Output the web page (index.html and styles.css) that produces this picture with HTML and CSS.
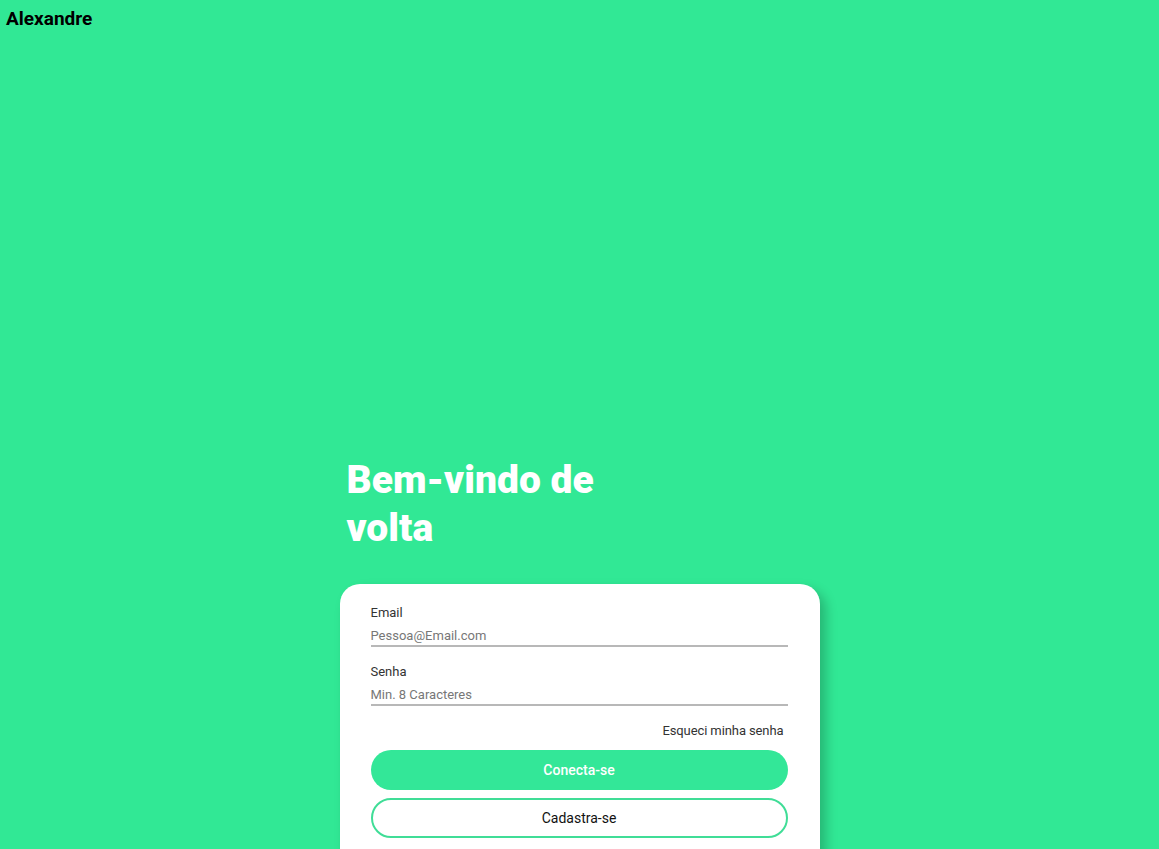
FILE: index.html
```html
<!DOCTYPE html>
<html lang="pt-BR">
<head>
<meta charset="utf-8">
<title>Login</title>
<link rel="stylesheet" href="styles.css">
</head>
<body>
  <header class="topbar">Alexandre</header>
  <main class="main">
    <div class="wrap">
      <h1 class="title">Bem-vindo de volta</h1>
      <form class="card">
        <div class="field">
          <label class="label" for="email">Email</label>
          <input class="input" id="email" type="email" placeholder="Pessoa@Email.com">
        </div>
        <div class="field">
          <label class="label" for="senha">Senha</label>
          <input class="input" id="senha" type="password" placeholder="Min. 8 Caracteres">
        </div>
        <div class="forgot-row"><a class="forgot" href="#">Esqueci minha senha</a></div>
        <button class="btn btn-primary" type="button">Conecta-se</button>
        <button class="btn btn-outline" type="button">Cadastra-se</button>
      </form>
    </div>
  </main>
</body>
</html>
```
FILE: styles.css
```css
* { box-sizing: border-box; }
html, body { height: 100%; }
body {
  margin: 0;
  background: #31e895;
  font-family: Roboto, "Liberation Sans", sans-serif;
  overflow: hidden;
}
.topbar {
  padding: 8px 6px 0;
  font-size: 19px;
  font-weight: 700;
  line-height: 22px;
  color: #000;
}
.main {
  display: flex;
  justify-content: center;
  padding-top: 426px;
}
.wrap {
  width: 480px;
}
.title {
  margin: 0 0 32px 7px;
  width: 275px;
  font-size: 39px;
  font-weight: 900;
  line-height: 48px;
  color: #fff;
}
.card {
  background: #fff;
  border-radius: 20px 20px 0 0;
  padding: 21px 32px 40px 31px;
  box-shadow: 6px 6px 12px rgba(0, 0, 0, 0.22);
  display: flex;
  flex-direction: column;
}
.field {
  display: flex;
  flex-direction: column;
  margin-bottom: 17px;
}
.label {
  font-size: 13px;
  color: #333;
  margin-bottom: 3px;
}
.input {
  border: none;
  border-bottom: 2px solid #b8b8b8;
  padding: 5px 0 2px;
  height: 24px;
  font-family: inherit;
  font-size: 13px;
  color: #333;
  outline: none;
  background: transparent;
}
.input::placeholder { color: #777; }
.forgot-row {
  display: flex;
  justify-content: flex-end;
  padding-right: 4px;
  margin-bottom: 12px;
}
.forgot {
  font-size: 13px;
  letter-spacing: -0.1px;
  color: #333;
  text-decoration: none;
}
.btn {
  height: 40px;
  border-radius: 20px;
  font-family: inherit;
  font-size: 14px;
  cursor: pointer;
}
.btn-primary {
  background: #33e798;
  border: none;
  color: #fff;
  font-weight: 500;
  margin-bottom: 8px;
}
.btn-outline {
  background: #fff;
  border: 2px solid #40dd97;
  color: #111;
}
```
